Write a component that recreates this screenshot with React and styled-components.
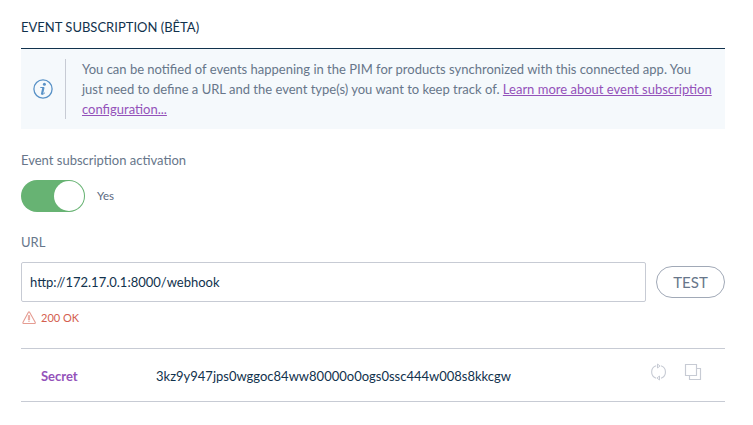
import React from "react";
import styled, { createGlobalStyle } from "styled-components";

const GlobalStyle = createGlobalStyle`
  *, *::before, *::after { box-sizing: border-box; }
  body {
    margin: 0;
    background: #fff;
    color: #11324d;
    font-family: Lato, "Liberation Sans", sans-serif;
    font-size: 13px;
    line-height: 20px;
  }
`;

const Page = styled.main`
  display: flex;
  flex-direction: column;
  width: 753px;
  height: 425px;
  padding: 5px 28px 0 21px;
`;

const SectionTitle = styled.h2`
  margin: 0;
  height: 44px;
  border-bottom: 1px solid #11324d;
  font-size: 13px;
  font-weight: 400;
  line-height: 44px;
`;

const Helper = styled.div`
  display: flex;
  height: 80px;
  padding: 10px 12px;
  background: #f5f9fc;
`;

const HelperIcon = styled.div`
  display: flex;
  align-items: center;
  width: 33px;
  border-right: 1px solid #c7cbd4;
`;

const HelperText = styled.p`
  flex: 1;
  margin: 0 0 0 16px;
  color: #67768a;
`;

const Link = styled.a`
  color: #9452ba;
  text-decoration: underline;
`;

const Label = styled.label`
  color: #67768a;
  margin-top: ${(p) => p.$top}px;
`;

const SwitchRow = styled.div`
  display: flex;
  align-items: center;
  gap: 12px;
  margin-top: 10px;
  color: #5b6a7f;
  font-size: 11.5px;
`;

const Switch = styled.button`
  display: flex;
  justify-content: flex-end;
  width: 64px;
  height: 32px;
  padding: 1px;
  border: 0;
  border-radius: 16px;
  background: #67b373;
`;

const Knob = styled.span`
  width: 30px;
  height: 30px;
  border-radius: 50%;
  background: #fff;
`;

const UrlRow = styled.div`
  display: flex;
  align-items: center;
  gap: 10px;
  margin-top: 10px;
`;

const UrlInput = styled.input`
  flex: 1;
  min-width: 0;
  height: 40px;
  padding: 0 8px;
  border: 1px solid #c7cbd4;
  border-radius: 2px;
  background: #fff;
  color: #11324d;
  font: inherit;
  outline: none;
`;

const TestButton = styled.button`
  width: 69px;
  height: 32px;
  padding: 0;
  border: 1px solid #a1a9b7;
  border-radius: 16px;
  background: #fff;
  color: #67768a;
  font-family: inherit;
  font-size: 15px;
`;

const Status = styled.div`
  display: flex;
  align-items: center;
  gap: 4px;
  height: 20px;
  margin-top: 6px;
  padding-left: 1px;
  color: #d4604f;
  font-size: 11px;
`;

const SecretRow = styled.div`
  display: flex;
  align-items: center;
  height: 54px;
  margin-top: 20px;
  padding: 2px 23px 0 20px;
  border-top: 1px solid #c7cbd4;
  border-bottom: 1px solid #c7cbd4;
`;

const SecretName = styled.span`
  width: 115px;
  color: #9452ba;
  font-weight: 700;
`;

const SecretValue = styled.span`
  flex: 1;
`;

const Actions = styled.div`
  display: flex;
  gap: 16px;
  margin-bottom: 9px;
`;

const InfoIcon = () => (
  <svg width="20" height="20" viewBox="0 0 20 20" fill="none">
    <circle cx="10" cy="10" r="9.1" stroke="#5992c7" strokeWidth="1.3" />
    <circle cx="11.4" cy="5.3" r="1.5" fill="#5992c7" />
    <path d="M7.3 8.5H11M8.6 15.2Q10.4 15.4 11.9 13.8" stroke="#5992c7" strokeWidth="1" />
    <path d="M10.5 8.2L8.9 15.4" stroke="#5992c7" strokeWidth="2.2" />
  </svg>
);

const WarningIcon = () => (
  <svg width="15" height="16" viewBox="0 0 15 16" fill="none" stroke="#e59c92" strokeLinejoin="round">
    <path d="M6.4 2.3Q7 1.4 7.6 2.3L13.2 12.2Q13.6 13.5 12.4 13.5H1.8Q.6 13.5 1 12.2Z" strokeWidth="1.1" />
    <path d="M6.4 5.5H7.6V10H6.4ZM6.4 11.5H7.6" strokeWidth=".9" />
  </svg>
);

const RefreshIcon = () => (
  <svg width="18" height="18" viewBox="0 0 18 18" fill="none" stroke="#c7cbd4">
    <path d="M10.8 2.8A6.5 6.5 0 0 1 11 15.2M6.2 15.2A6.5 6.5 0 0 1 6.2 2.8" strokeWidth="1.1" />
    <path d="M7.5 1V5L10 3ZM9.5 13V17L7 15Z" strokeWidth="1" />
  </svg>
);

const CopyIcon = () => (
  <svg width="18" height="18" viewBox="0 0 18 18" fill="none" stroke="#c7cbd4">
    <path d="M1.5 1.5H12.5V12.5H1.5ZM12.5 5.5H16.5V16.5H5.5V12.5" strokeWidth="1.15" />
  </svg>
);

export default function App() {
  return (
    <>
      <GlobalStyle />
      <Page>
        <SectionTitle>EVENT SUBSCRIPTION (BÊTA)</SectionTitle>
        <Helper>
          <HelperIcon><InfoIcon /></HelperIcon>
          <HelperText>
            You can be notified of events happening in the PIM for products synchronized with this connected app. You just
            need to define a URL and the event type(s) you want to keep track of.{" "}
            <Link href="#">Learn more about event subscription configuration...</Link>
          </HelperText>
        </Helper>
        <Label $top={21}>Event subscription activation</Label>
        <SwitchRow>
          <Switch type="button" role="switch" aria-checked="true"><Knob /></Switch>
          Yes
        </SwitchRow>
        <Label $top={20} htmlFor="url">URL</Label>
        <UrlRow>
          <UrlInput id="url" defaultValue="http://172.17.0.1:8000/webhook" />
          <TestButton type="button">TEST</TestButton>
        </UrlRow>
        <Status><WarningIcon />200 OK</Status>
        <SecretRow>
          <SecretName>Secret</SecretName>
          <SecretValue>3kz9y947jps0wggoc84ww80000o0ogs0ssc444w008s8kkcgw</SecretValue>
          <Actions><RefreshIcon /><CopyIcon /></Actions>
        </SecretRow>
      </Page>
    </>
  );
}
